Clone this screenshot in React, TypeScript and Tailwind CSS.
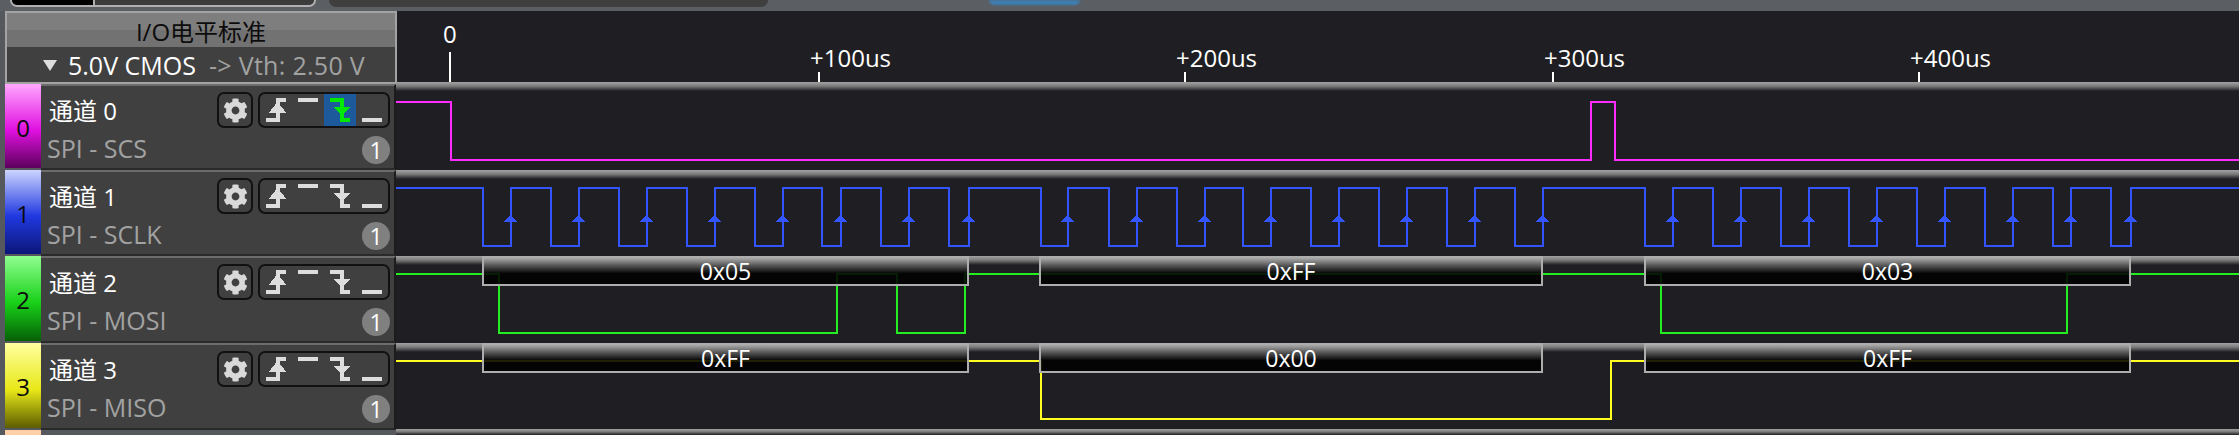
import { FaCog } from 'react-icons/fa';

const WIDTH = 1843;
const ORIGIN = 396;

interface Channel {
  id: number;
  name: string;
  decoder: string;
  barClass: string;
}

const channels: Channel[] = [
  { id: 0, name: '通道 0', decoder: 'SPI - SCS', barClass: 'bg-[linear-gradient(#ffa8ff,#e010e0_55%,#5c005c)] h-[84px]' },
  { id: 1, name: '通道 1', decoder: 'SPI - SCLK', barClass: 'bg-[linear-gradient(#ccd4ff,#2038e0_55%,#0c1678)] h-[84px]' },
  { id: 2, name: '通道 2', decoder: 'SPI - MOSI', barClass: 'bg-[linear-gradient(#90ff90,#18d018_55%,#066006)] h-[85px]' },
  { id: 3, name: '通道 3', decoder: 'SPI - MISO', barClass: 'bg-[linear-gradient(#ffffa0,#e8e818_55%,#5c5c00)] h-[85px]' },
];

const ticks = [
  { x: 818, label: '+100us' },
  { x: 1184, label: '+200us' },
  { x: 1552, label: '+300us' },
  { x: 1918, label: '+400us' },
];

// edges read off the capture, in page x
const sclkEdges = [
  482, 510, 550, 578, 618, 646, 686, 714, 754, 782, 821, 840, 880, 908, 948, 968,
  1040, 1067, 1108, 1136, 1176, 1204, 1242, 1270, 1310, 1338, 1378, 1406, 1446, 1474, 1514, 1542,
  1644, 1672, 1712, 1740, 1780, 1808, 1848, 1876, 1916, 1944, 1984, 2012, 2052, 2070, 2110, 2130,
];

// builds a square wave path, x values given in page coordinates
function wave(edges: number[], high: number, low: number) {
  let y = high;
  let d = `M0 ${high}`;
  for (const edge of edges) {
    const x = edge - ORIGIN + 0.5;
    y = y === high ? low : high;
    d += ` H${x} V${y}`;
  }
  return `${d} H${WIDTH}`;
}

interface TraceProps {
  edges: number[];
  high: number;
  low: number;
  color: string;
  height: number;
  arrows?: boolean;
}

function Trace({ edges, high, low, color, height, arrows }: TraceProps) {
  return (
    <svg width={WIDTH} height={height} className="block" shapeRendering="crispEdges">
      <path d={wave(edges, high, low)} fill="none" stroke={color} strokeWidth="2" />
      {arrows &&
        edges
          .filter((_, i) => i % 2 === 1)
          .map((edge) => {
            const x = edge - ORIGIN + 0.5;
            return <path key={edge} d={`M${x} ${high + 27} L${x + 6.5} ${high + 34} H${x - 6.5} Z`} fill={color} />;
          })}
    </svg>
  );
}

function RisingIcon() {
  return (
    <svg width="32" height="32" viewBox="0 0 32 32" className="block" fill="currentColor" shapeRendering="crispEdges">
      <path d="M6 24h10V4h10v4h-6v20H6z" />
      <path d="M17.5 8l9 11H8.5z" />
    </svg>
  );
}

function HighIcon() {
  return (
    <svg width="32" height="32" viewBox="0 0 32 32" className="block" fill="currentColor">
      <rect x="6" y="4" width="20" height="4" />
    </svg>
  );
}

function FallingIcon() {
  return (
    <svg width="32" height="32" viewBox="0 0 32 32" className="block" fill="currentColor" shapeRendering="crispEdges">
      <path d="M6 4h14v20h6v4H16V8H6z" />
      <path d="M18 21l-9-8h18z" />
    </svg>
  );
}

function LowIcon() {
  return (
    <svg width="32" height="32" viewBox="0 0 32 32" className="block" fill="currentColor">
      <rect x="6" y="24" width="20" height="4" />
    </svg>
  );
}

function ChannelRow({ channel }: { channel: Channel }) {
  const selected = channel.id === 0;
  return (
    <div className="flex">
      <div className={`w-[36px] flex items-center justify-center pt-[3px] text-[24px] text-[#0c0c0c] ${channel.barClass}`}>
        {channel.id}
      </div>
      <div className="flex-1 flex flex-col bg-[#404040] border-t-2 border-t-[#6c6c6c] border-b-2 border-b-[#2a2a2a] border-r-2 border-r-[#1c1c1c] pl-[6px] pr-[4px] -mb-[2px]">
        <div className="flex items-center justify-between pt-[6px]">
          <span className="pl-[2px] pt-[2px] text-[24px] leading-none text-white">{channel.name}</span>
          <div className="flex gap-[5px]">
            <div className="w-[36px] h-[36px] flex items-center justify-center border-2 border-[#111111] rounded-[7px] text-[#d9d9d9]">
              <FaCog size={25} />
            </div>
            <div className="flex h-[36px] w-[132px] border-2 border-[#111111] rounded-[7px] text-[#dddddd]">
              <RisingIcon />
              <HighIcon />
              <div className={selected ? 'bg-[#1c5a9c] text-[#00e800]' : ''}>
                <FallingIcon />
              </div>
              <LowIcon />
            </div>
          </div>
        </div>
        <div className="flex items-center justify-between pt-[8px]">
          <span className="pb-[3px] text-[25px] leading-none text-[#a2a2a2]">{channel.decoder}</span>
          <span className="w-[28px] h-[28px] rounded-full bg-[#808080] flex items-center justify-center text-[23px] leading-none text-white">1</span>
        </div>
      </div>
    </div>
  );
}

function Band() {
  return <div className="h-[9px] bg-[linear-gradient(#a2a2a2,#7c7c7c_45%,#1f1f23)]" />;
}

function DataBox({ left, width, label }: { left: number; width: number; label: string }) {
  return (
    <div
      className="absolute top-0 h-[30px] border-2 border-[#adadad] bg-[linear-gradient(rgba(170,170,170,0.95),rgba(0,0,0,0.88)_60%)] flex items-center justify-center text-[23px] leading-none text-white"
      style={{ left, width }}
    >
      {label}
    </div>
  );
}

export default function App() {
  return (
    <div className="w-[2239px] h-[435px] overflow-hidden flex flex-col bg-[#1f1f23] font-['Open_Sans','Noto_Sans_CJK_SC',sans-serif]">
      {/* cropped toolbar at the top edge */}
      <div className="h-[11px] shrink-0 flex items-start bg-[#5b5e63] pl-[10px]">
        <div className="flex w-[306px] h-[7px] border-x-2 border-b-2 border-[#b0b0b0] rounded-b-[7px] overflow-hidden">
          <div className="w-[81px] bg-black" />
          <div className="w-[2px] bg-[#b0b0b0]" />
          <div className="flex-1 bg-[#3c3c3c]" />
        </div>
        <div className="ml-[13px] w-[439px] h-[7px] bg-[#3f3f3f] rounded-b-[7px]" />
        <div className="ml-[221px] w-[91px] h-[5px] bg-[#3c7fb4] rounded-b-[6px] blur-[1px]" />
      </div>

      <div className="flex-1 flex min-h-0">
        {/* channel list */}
        <div className="w-[396px] shrink-0 flex flex-col bg-[#55585c] pl-[5px]">
          <div className="h-[73px] shrink-0 flex flex-col border-2 border-[#a3a3a3] mr-[-1px]">
            <div className="h-[34px] flex items-center justify-center pt-[3px] text-[24px] leading-none text-[#0c0c0c] bg-[linear-gradient(#7e7e7e_50%,#727272_50%)]">
              I/O电平标准
            </div>
            <div className="flex-1 flex items-center bg-[#404040] pl-[36px] pt-[1px] text-[25px] leading-none">
              <span className="w-0 h-0 mr-[11px] border-x-[7px] border-x-transparent border-t-[11px] border-t-[#dddddd]" />
              <span className="text-white">5.0V CMOS</span>
              <span className="ml-[13px] text-[#a2a2a2] tracking-[0.3px]">-&gt; Vth: 2.50 V</span>
            </div>
          </div>
          <div className="flex flex-col gap-[2px]">
            {channels.map((channel) => (
              <ChannelRow key={channel.id} channel={channel} />
            ))}
            <div className="h-[6px] w-[36px] bg-[#ffd0a8]" />
          </div>
        </div>

        {/* traces */}
        <div className="flex-1 min-w-0 flex flex-col">
          <div className="relative h-[71px] shrink-0 text-[24px] leading-none text-white">
            <span className="absolute left-[47px] top-[11px]">0</span>
            <div className="absolute left-[53px] top-[41px] w-[2px] h-[30px] bg-white" />
            {ticks.map((tick) => (
              <div key={tick.x}>
                <span className="absolute top-[35px]" style={{ left: tick.x - ORIGIN - 8 }}>
                  {tick.label}
                </span>
                <div className="absolute top-[61px] w-[2px] h-[10px] bg-white" style={{ left: tick.x - ORIGIN }} />
              </div>
            ))}
          </div>

          <div className="h-[88px] shrink-0 relative">
            <Band />
            <div className="absolute left-0 top-0">
              <Trace edges={[450, 1590, 1614]} high={20} low={78} color="#ff2cff" height={88} />
            </div>
          </div>
          <div className="h-[86px] shrink-0 relative">
            <Band />
            <div className="absolute left-0 top-0">
              <Trace edges={sclkEdges} high={18} low={76} color="#3355ff" height={86} arrows />
            </div>
          </div>
          <div className="h-[87px] shrink-0 relative">
            <Band />
            <div className="absolute left-0 top-0">
              <Trace edges={[498, 836, 896, 964, 1660, 2066]} high={18} low={77} color="#22ee22" height={87} />
            </div>
            <DataBox left={86} width={487} label="0x05" />
            <DataBox left={643} width={504} label="0xFF" />
            <DataBox left={1248} width={487} label="0x03" />
          </div>
          <div className="h-[86px] shrink-0 relative">
            <Band />
            <div className="absolute left-0 top-0">
              <Trace edges={[1040, 1610]} high={18} low={76} color="#ffff22" height={86} />
            </div>
            <DataBox left={86} width={487} label="0xFF" />
            <DataBox left={643} width={504} label="0x00" />
            <DataBox left={1248} width={487} label="0xFF" />
          </div>
          <Band />
        </div>
      </div>
    </div>
  );
}
